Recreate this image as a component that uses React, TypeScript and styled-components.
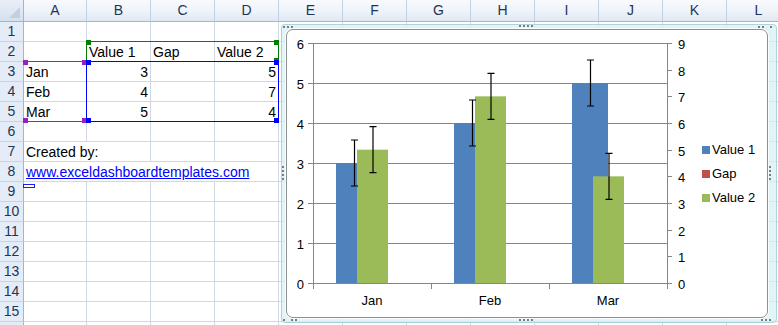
import React from "react";
import styled, { createGlobalStyle, css } from "styled-components";

const GlobalStyle = createGlobalStyle`
  html, body {
    margin: 0;
    padding: 0;
    background: #ffffff;
    overflow: hidden;
  }
  body {
    font-family: "Liberation Sans", Arial, sans-serif;
  }
`;

const COLS = ["A", "B", "C", "D", "E", "F", "G", "H", "I", "J", "K", "L"];
const COL_WIDTHS = [63, 64, 64, 64, 64, 64, 64, 64, 64, 64, 64, 64];
const TEMPLATE = `24px ${COL_WIDTHS.map((w) => `${w}px`).join(" ")}`;
const ROW_COUNT = 16;

type CellData = {
  text: string;
  align?: "left" | "right";
  span?: number;
  link?: boolean;
};

const DATA: Record<number, Record<string, CellData>> = {
  2: {
    B: { text: "Value 1" },
    C: { text: "Gap" },
    D: { text: "Value 2" },
  },
  3: { A: { text: "Jan" }, B: { text: "3", align: "right" }, D: { text: "5", align: "right" } },
  4: { A: { text: "Feb" }, B: { text: "4", align: "right" }, D: { text: "7", align: "right" } },
  5: { A: { text: "Mar" }, B: { text: "5", align: "right" }, D: { text: "4", align: "right" } },
  7: { A: { text: "Created by:", span: 2 } },
  8: { A: { text: "www.exceldashboardtemplates.com", span: 4, link: true } },
};

const Sheet = styled.div`
  position: relative;
  width: 778px;
  height: 325px;
  overflow: hidden;
  font-size: 14px;
  color: #000;
`;

const Row = styled.div<{ $h: number }>`
  display: grid;
  grid-template-columns: ${TEMPLATE};
  height: ${(p) => p.$h}px;
`;

const Corner = styled.div`
  position: relative;
  box-sizing: border-box;
  background: linear-gradient(#e9eff8, #d5e0ef);
  border-right: 1px solid #9eb6ce;
  border-bottom: 1px solid #9eb6ce;

  &::after {
    content: "";
    position: absolute;
    right: 3px;
    bottom: 3px;
    width: 0;
    height: 0;
    border-left: 11px solid transparent;
    border-bottom: 11px solid #c3cfdf;
  }
`;

const ColHeader = styled.div`
  box-sizing: border-box;
  background: linear-gradient(#f8fafd 0%, #eef3f9 55%, #dfe7f2 100%);
  border-right: 1px solid #c2d1e4;
  border-bottom: 1px solid #9eb6ce;
  color: #1e3557;
  text-align: center;
  line-height: 21px;
`;

const RowHeader = styled.div`
  box-sizing: border-box;
  background: #e4ecf7;
  border-right: 1px solid #9eb6ce;
  border-bottom: 1px solid #c5d3e5;
  color: #1e3557;
  text-align: center;
  line-height: 19px;
`;

const Cell = styled.div<{ $align?: "left" | "right"; $span?: number }>`
  grid-column: span ${(p) => p.$span ?? 1};
  box-sizing: border-box;
  border-right: 1px solid #d0d7e5;
  border-bottom: 1px solid #d0d7e5;
  padding: 0 2px;
  line-height: 20px;
  text-align: ${(p) => p.$align ?? "left"};
  white-space: nowrap;
  overflow: hidden;
`;

const Link = styled.a`
  color: #0000ff;
  text-decoration: underline;
`;

/* data-source outlines that Excel draws over the cells while a chart is selected */
const RangeBox = styled.div<{ $x: number; $y: number; $w: number; $h: number; $c: string; $openLeft?: boolean }>`
  position: absolute;
  left: ${(p) => p.$x}px;
  top: ${(p) => p.$y}px;
  width: ${(p) => p.$w}px;
  height: ${(p) => p.$h}px;
  box-sizing: border-box;
  border: 1px solid ${(p) => p.$c};
  border-left-color: ${(p) => (p.$openLeft ? "transparent" : p.$c)};
  color: ${(p) => p.$c};
  pointer-events: none;
`;

type CornerPos = "tl" | "tr" | "bl" | "br";

const Handle = styled.span<{ $at: CornerPos }>`
  position: absolute;
  width: 5px;
  height: 5px;
  background: currentColor;
  ${(p) => (p.$at[0] === "t" ? "top: -2px;" : "bottom: -2px;")}
  ${(p) => (p.$at[1] === "l" ? "left: -1px;" : "right: -1px;")}
`;

const LinkMarker = styled.div`
  position: absolute;
  left: 23px;
  top: 184px;
  width: 12px;
  height: 4px;
  box-sizing: border-box;
  border: 1px solid #1a1aff;
`;

const ChartFrame = styled.div`
  position: absolute;
  left: 281px;
  top: 24px;
  width: 496px;
  height: 299px;
  box-sizing: border-box;
  padding: 4px 8px 4px 4px;
  border: 1px solid #b0d2da;
  border-radius: 4px;
  background: rgba(214, 241, 245, 0.72);
`;

const ChartArea = styled.div`
  box-sizing: border-box;
  height: 100%;
  border: 1px solid #8e8e8e;
  border-radius: 7px;
  background: #ffffff;
  display: flex;
  align-items: center;
  overflow: hidden;
  box-shadow: 0 0 0 1px rgba(255, 255, 255, 0.8);
`;

const Plot = styled.svg`
  display: block;
  flex-shrink: 0;
  font-family: "Liberation Sans", Arial, sans-serif;
  font-size: 13px;
`;

const Legend = styled.div`
  display: flex;
  flex-direction: column;
  gap: 8px;
  font-size: 13px;
`;

const LegendItem = styled.div`
  display: flex;
  align-items: center;
  gap: 2px;
  height: 16px;
`;

const Swatch = styled.span<{ $c: string }>`
  width: 8px;
  height: 8px;
  background: ${(p) => p.$c};
`;

/* resize grips on the selected chart frame */
type GripPos = "tl" | "tr" | "bl" | "br" | "top" | "bottom" | "left" | "right";

const gripPlace: Record<GripPos, ReturnType<typeof css>> = {
  tl: css`top: 1px; left: 1px;`,
  tr: css`top: 1px; right: 4px;`,
  bl: css`bottom: 1px; left: 1px;`,
  br: css`bottom: 1px; right: 5px;`,
  top: css`top: 0; left: 237px;`,
  bottom: css`bottom: 1px; left: 237px;`,
  left: css`top: 141px; left: 0;`,
  right: css`top: 141px; right: 5px;`,
};

const Grip = styled.div<{ $at: GripPos }>`
  position: absolute;
  display: grid;
  gap: 2px;
  grid-auto-flow: ${(p) => (p.$at === "left" || p.$at === "right" ? "row" : "column")};
  grid-template-columns: ${(p) => (p.$at.length === 2 ? "2px 2px" : "none")};
  ${(p) => gripPlace[p.$at]}
`;

const GripDot = styled.span<{ $hidden?: boolean }>`
  width: 2px;
  height: 2px;
  background: ${(p) => (p.$hidden ? "transparent" : "#7d7d7d")};
`;

const CORNER_DOTS: Record<string, boolean[]> = {
  tl: [true, true, true, false],
  tr: [true, true, false, true],
  bl: [true, false, true, true],
  br: [false, true, true, true],
};

function FrameGrip({ at }: { at: GripPos }) {
  const dots = CORNER_DOTS[at] ?? [true, true, true, true];
  return (
    <Grip $at={at}>
      {dots.map((on, i) => (
        <GripDot key={i} $hidden={!on} />
      ))}
    </Grip>
  );
}

const BLUE = "#4f81bd";
const RED = "#c0504d";
const GREEN = "#9bbb59";
const AXIS = "#868686";

const Y0 = 283;
const UNIT = 40;
const SUNIT = 240 / 9;
const ERR = 23;

const CATS = [
  { name: "Jan", c: 372, v1: 3, v2: 5 },
  { name: "Feb", c: 490, v1: 4, v2: 7 },
  { name: "Mar", c: 608, v1: 5, v2: 4 },
];

const GRIPS: GripPos[] = ["tl", "top", "tr", "left", "right", "bl", "bottom", "br"];

function ErrorBar({ x, y }: { x: number; y: number }) {
  return (
    <g stroke="#000" strokeWidth={1.2}>
      <line x1={x} y1={y - ERR} x2={x} y2={y + ERR} />
      <line x1={x - 3.5} y1={y - ERR} x2={x + 3.5} y2={y - ERR} />
      <line x1={x - 3.5} y1={y + ERR} x2={x + 3.5} y2={y + ERR} />
    </g>
  );
}

function Chart() {
  return (
    <ChartFrame>
      {GRIPS.map((g) => (
        <FrameGrip key={g} at={g} />
      ))}
      <ChartArea>
        <Plot width={415} height={287} viewBox="287 30 415 287">
          {[0, 1, 2, 3, 4, 5, 6].map((i) => {
            const y = Y0 - i * UNIT + 0.5;
            return (
              <g key={i}>
                <line x1={308} y1={y} x2={667} y2={y} stroke={AXIS} strokeWidth={1} />
                <text x={304} y={y + 5} textAnchor="end" fill="#000">
                  {i}
                </text>
              </g>
            );
          })}
          {[0, 1, 2, 3, 4, 5, 6, 7, 8, 9].map((j) => {
            const y = Math.round(Y0 - j * SUNIT) + 0.5;
            return (
              <g key={j}>
                <line x1={667} y1={y} x2={672} y2={y} stroke={AXIS} strokeWidth={1} />
                <text x={678} y={y + 5} fill="#000">
                  {j}
                </text>
              </g>
            );
          })}
          <line x1={313.5} y1={43} x2={313.5} y2={284} stroke={AXIS} />
          <line x1={667.5} y1={43} x2={667.5} y2={284} stroke={AXIS} />
          {[313, 431, 549, 667].map((x) => (
            <line key={x} x1={x + 0.5} y1={283} x2={x + 0.5} y2={289} stroke={AXIS} />
          ))}
          {CATS.map((c) => (
            <rect key={`b${c.name}`} x={c.c - 36} y={Y0 - c.v1 * UNIT} width={36} height={c.v1 * UNIT} fill={BLUE} />
          ))}
          {CATS.map((c) => (
            <rect key={`g${c.name}`} x={c.c - 15} y={Y0 - c.v2 * SUNIT} width={31} height={c.v2 * SUNIT} fill={GREEN} />
          ))}
          {CATS.map((c) => (
            <g key={`e${c.name}`}>
              <ErrorBar x={c.c - 17.5} y={Y0 - c.v1 * UNIT} />
              <ErrorBar x={c.c + 1} y={Y0 - c.v2 * SUNIT} />
            </g>
          ))}
          {CATS.map((c) => (
            <text key={`t${c.name}`} x={c.c} y={305} textAnchor="middle" fill="#000">
              {c.name}
            </text>
          ))}
        </Plot>
        <Legend>
          <LegendItem>
            <Swatch $c={BLUE} />
            Value 1
          </LegendItem>
          <LegendItem>
            <Swatch $c={RED} />
            Gap
          </LegendItem>
          <LegendItem>
            <Swatch $c={GREEN} />
            Value 2
          </LegendItem>
        </Legend>
      </ChartArea>
    </ChartFrame>
  );
}

function SheetRow({ n }: { n: number }) {
  const data = DATA[n] ?? {};
  const cells: React.ReactNode[] = [];
  let i = 0;
  while (i < COLS.length) {
    const col = COLS[i];
    const d = data[col];
    const span = d?.span ?? 1;
    cells.push(
      <Cell key={col} $align={d?.align} $span={span}>
        {d ? d.link ? <Link href="#">{d.text}</Link> : d.text : null}
      </Cell>
    );
    i += span;
  }
  return (
    <Row $h={20}>
      {/* the last row is only a sliver at the window edge */}
      <RowHeader>{n < ROW_COUNT ? n : null}</RowHeader>
      {cells}
    </Row>
  );
}

function Range({
  x, y, w, h, color, corners, openLeft,
}: {
  x: number; y: number; w: number; h: number; color: string; corners: CornerPos[]; openLeft?: boolean;
}) {
  return (
    <RangeBox $x={x} $y={y} $w={w} $h={h} $c={color} $openLeft={openLeft}>
      {corners.map((c) => (
        <Handle key={c} $at={c} />
      ))}
    </RangeBox>
  );
}

export default function App() {
  const rows = Array.from({ length: ROW_COUNT }, (_, i) => i + 1);
  return (
    <>
      <GlobalStyle />
      <Sheet>
        <Row $h={22}>
          <Corner />
          {COLS.map((c) => (
            <ColHeader key={c}>{c}</ColHeader>
          ))}
        </Row>
        {rows.map((n) => (
          <SheetRow key={n} n={n} />
        ))}

        <Range x={23} y={61} w={64} h={61} color="#9b1fc0" corners={["tl", "tr", "bl", "br"]} openLeft />
        <Range x={86} y={41} w={193} h={21} color="#008000" corners={["tl", "tr", "br"]} />
        <Range x={86} y={61} w={193} h={61} color="#0000ff" corners={["tl", "tr", "bl", "br"]} />

        <LinkMarker />
        <Chart />
      </Sheet>
    </>
  );
}
